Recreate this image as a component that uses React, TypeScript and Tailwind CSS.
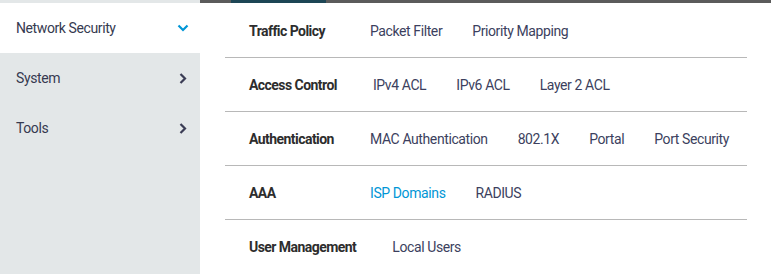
const rows = [
  { label: 'Traffic Policy', links: ['Packet Filter', 'Priority Mapping'] },
  { label: 'Access Control', links: ['IPv4 ACL', 'IPv6 ACL', 'Layer 2 ACL'] },
  { label: 'Authentication', links: ['MAC Authentication', '802.1X', 'Portal', 'Port Security'] },
  { label: 'AAA', links: ['ISP Domains', 'RADIUS'], active: 'ISP Domains' },
  { label: 'User Management', links: ['Local Users'] },
]

function ChevronDown() {
  return (
    <svg width="12" height="8" viewBox="0 0 12 8" className="text-[#0096d6]">
      <polyline points="1.5,1.5 6,6 10.5,1.5" fill="none" stroke="currentColor" strokeWidth="2.2" />
    </svg>
  )
}

function ChevronRight() {
  return (
    <svg width="8" height="11" viewBox="0 0 8 11" className="text-[#3b3d55]">
      <polyline points="1.5,1 6,5.5 1.5,10" fill="none" stroke="currentColor" strokeWidth="2.2" />
    </svg>
  )
}

export default function App() {
  return (
    <div
      className="flex w-[771px] h-[274px] overflow-hidden bg-white text-[14px] tracking-[-0.4px]"
      style={{ fontFamily: 'Roboto, "Liberation Sans", sans-serif' }}
    >
      {/* Sidebar */}
      <div className="w-[200px] shrink-0 bg-[#e3e7e8] pt-[3px]">
        <div className="h-[50px] bg-white flex items-center justify-between pl-4 pr-[11px] text-[#363a50]">
          <span>Network Security</span>
          <ChevronDown />
        </div>
        <div className="h-[50px] flex items-center justify-between pl-4 pr-[13px] text-[#363a50]">
          <span>System</span>
          <ChevronRight />
        </div>
        <div className="h-[50px] flex items-center justify-between pl-4 pr-[13px] text-[#363a50]">
          <span>Tools</span>
          <ChevronRight />
        </div>
      </div>

      {/* Menu panel */}
      <div className="flex-1 flex flex-col">
        <div className="h-[3px] bg-[#5b5b5b] flex">
          <div className="ml-[31px] w-[95px] bg-[#1d4655]" />
        </div>
        <div className="pt-[1px] ml-[25px] mr-[24px]">
          {rows.map((row, i) => (
            <div
              key={row.label}
              className={`h-[51px] pt-[2px] box-content flex items-center pl-6 ${i < rows.length - 1 ? 'border-b border-[#b8b8b8]' : ''}`}
            >
              <span className="min-w-[85px] font-bold text-[#2d2d2d] mr-[36px] tracking-[-0.55px]">{row.label}</span>
              <div className="flex gap-[30px] tracking-[-0.4px]">
                {row.links.map((l) => (
                  <span key={l} className={l === row.active ? 'text-[#0096d6]' : 'text-[#3c3f5e]'}>
                    {l}
                  </span>
                ))}
              </div>
            </div>
          ))}
        </div>
      </div>
    </div>
  )
}
